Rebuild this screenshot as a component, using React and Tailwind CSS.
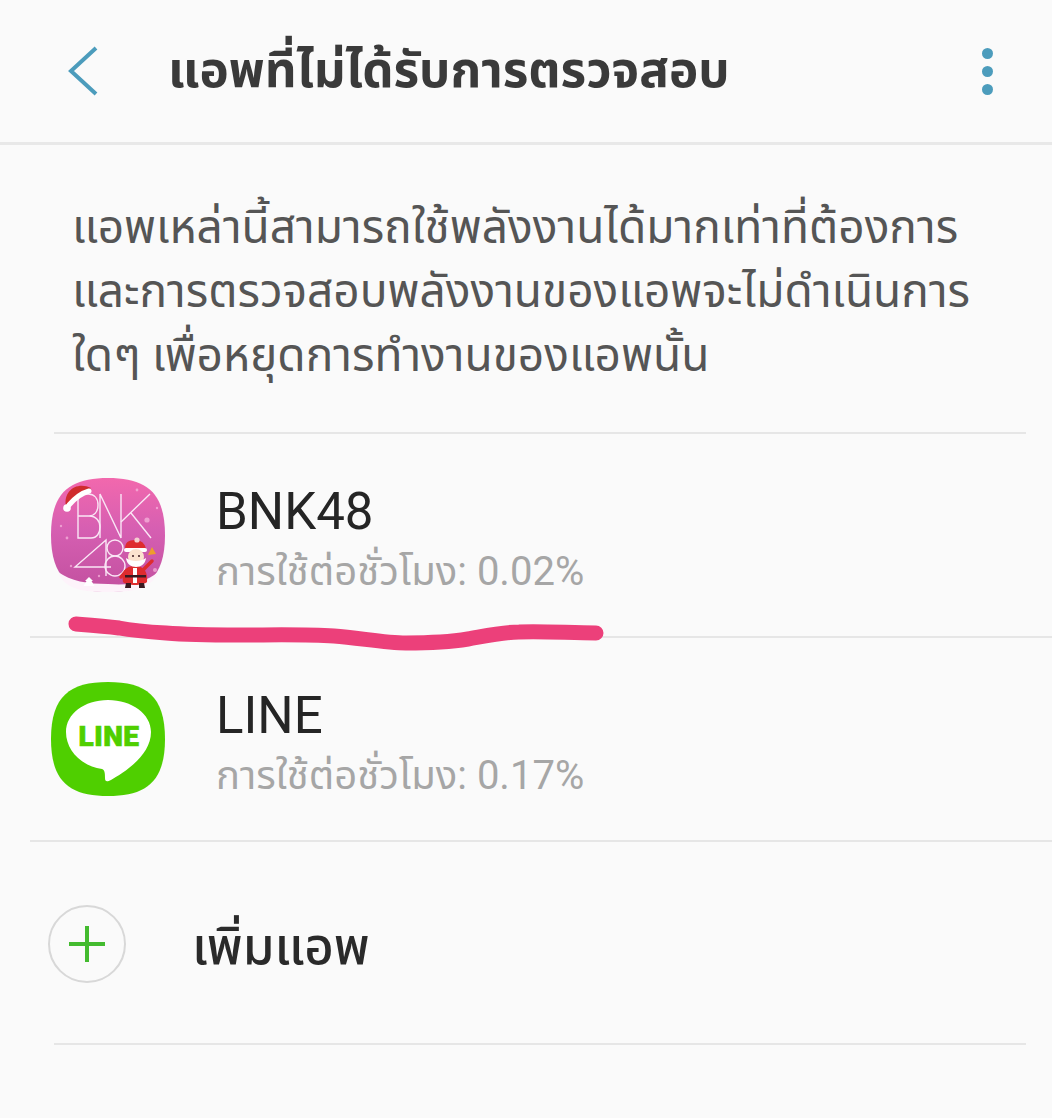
import React from "react";

const squircle =
  "M57 0C95 0 114 14 114 57C114 100 95 114 57 114C19 114 0 100 0 57C0 14 19 0 57 0Z";

function BnkIcon() {
  return (
    <svg width="114" height="114" viewBox="0 0 114 114" className="shrink-0">
      <defs>
        <linearGradient id="bnkBg" x1="0" y1="0" x2="0" y2="1">
          <stop offset="0" stopColor="#f268ad" />
          <stop offset="0.45" stopColor="#d65fb2" />
          <stop offset="1" stopColor="#c2509f" />
        </linearGradient>
      </defs>
      <path d={squircle} fill="url(#bnkBg)" />
      {/* snow along the lower edge */}
      <path
        d="M7 94C20 103 36 106 57 106C80 108 95 104 107 94C101 109 88 114 57 114C26 114 13 109 7 94Z"
        fill="#fdf3fa"
      />
      <g fill="#f6b4dc" opacity="0.75">
        <circle cx="96" cy="42" r="2.6" />
        <circle cx="104" cy="92" r="2" />
        <circle cx="16" cy="60" r="1.4" />
        <circle cx="86" cy="12" r="1.4" />
        <circle cx="10" cy="48" r="1.2" />
        <circle cx="20" cy="88" r="1.2" />
        <circle cx="106" cy="30" r="1.2" />
        <circle cx="48" cy="98" r="1.2" />
      </g>
      <g fill="none" stroke="#fae6f5" strokeWidth="1.4">
        <path d="M27 16V60H40C46 60 49 55 49 49C49 43 45 38 38 38H27M38 38C43 38 47 34 47 27C47 20 43 16 37 16H27" />
        <path d="M49 60V16L70 60V16" />
        <path d="M70 44L99 16M80 35L100 60" />
        <path d="M60 89H24L55 62V98" />
        <circle cx="64" cy="70" r="8" />
        <circle cx="64" cy="88" r="10" />
      </g>
      {/* Santa hat */}
      <path d="M15 28C12 13 26 3 40 10C34 14 26 20 20 28Z" fill="#cf2b2d" />
      <path d="M18 27C24 20 31 15 38 13" fill="none" stroke="#fff" strokeWidth="5" strokeLinecap="round" />
      <circle cx="16" cy="30" r="3.8" fill="#fff" />
      {/* Santa */}
      <path d="M72 104C70 94 74 88 84 88C93 88 97 94 96 104C92 108 76 108 72 104Z" fill="#de2c2e" />
      <path d="M92 92L101 83" stroke="#de2c2e" strokeWidth="3.5" strokeLinecap="round" />
      <path d="M75 93L70 99" stroke="#de2c2e" strokeWidth="3.5" strokeLinecap="round" />
      <rect x="82" y="90" width="4" height="15" fill="#fff" />
      <rect x="74" y="97" width="21" height="2.5" fill="#3a1a20" />
      <path d="M75 105H80V110H74ZM88 105H93L94 110H88Z" fill="#3a1a20" />
      <path d="M74 71C74 62 80 62 86 62C92 63 95 68 95 72Z" fill="#de2c2e" />
      <circle cx="86" cy="62" r="2.6" fill="#f4d0d0" />
      <rect x="73" y="70" width="23" height="4" rx="2" fill="#fff" />
      <circle cx="85" cy="79" r="8" fill="#fbe2cf" />
      <path d="M75 80C76 92 94 92 95 80C90 84 80 84 75 80Z" fill="#fff" />
      <circle cx="82" cy="78" r="1" fill="#3a1a20" />
      <circle cx="88" cy="78" r="1" fill="#3a1a20" />
      {/* Bell */}
      <path d="M97 77L101 69L105 76Z" fill="#ee9d2c" />
      {/* Tree */}
      <path d="M38 99L42 103H40.5L43.5 108H32.5L35.5 103H34Z" fill="#fff" />
    </svg>
  );
}

function LineIcon() {
  return (
    <svg width="114" height="114" viewBox="0 0 114 114" className="shrink-0">
      <path d={squircle} fill="#4fcf00" />
      <path
        d="M57 18C33 18 15 32 15 50C15 68 30 84 51 87C54 88 54 92 54 96C54 100 56 100 60 98C72 91 100 74 100 50C100 32 81 18 57 18Z"
        fill="#fff"
      />
      <text
        x="58"
        y="64"
        textAnchor="middle"
        fill="#4fcf00"
        stroke="#4fcf00"
        strokeWidth="0.7"
        fontFamily="Roboto, sans-serif"
        fontWeight="900"
        fontSize="28"
        letterSpacing="0.5"
      >
        LINE
      </text>
    </svg>
  );
}

function AppRow({ icon, name, usage }) {
  return (
    <div className="ml-[30px] flex h-[204px] items-center border-b-2 border-[#e6e6e6] pl-[21px]">
      {icon}
      <div className="ml-[51px] mt-[12px]">
        <div className="text-[51px] leading-[62px] text-[#252525]">{name}</div>
        <div className="text-[40px] leading-[58px] text-[#a6a6a6]">{usage}</div>
      </div>
    </div>
  );
}

export default function App() {
  return (
    <div className="relative h-[1118px] w-[1052px] overflow-hidden bg-[#fafafa] font-['Roboto','Noto_Sans','Noto_Sans_Thai','DejaVu_Sans',sans-serif]">
      {/* Top bar */}
      <div className="flex h-[145px] items-center border-b-[3px] border-[#e8e8e8] pl-[68px] pr-[59px]">
        <svg width="30" height="50" viewBox="0 0 30 50" className="shrink-0">
          <path d="M28 2L3 25L28 48" fill="none" stroke="#4c9cbc" strokeWidth="4" />
        </svg>
        <h1 className="ml-[70px] flex-1 text-[49.4px] font-bold leading-none text-[#3a3a3a]">
          แอพที่ไม่ได้รับการตรวจสอบ
        </h1>
        <div className="flex flex-col gap-[7px]">
          <span className="h-[11px] w-[11px] rounded-full bg-[#4c9cbc]" />
          <span className="h-[11px] w-[11px] rounded-full bg-[#4c9cbc]" />
          <span className="h-[11px] w-[11px] rounded-full bg-[#4c9cbc]" />
        </div>
      </div>

      {/* Explanation */}
      <div className="ml-[54px] mr-[26px] h-[289px] border-b-2 border-[#e6e6e6] pl-[18px] pt-[50px]">
        <p className="text-[46px] leading-[64px] whitespace-nowrap text-[#555555]">
          แอพเหล่านี้สามารถใช้พลังงานได้มากเท่าที่ต้องการ
          <br />
          และการตรวจสอบพลังงานของแอพจะไม่ดำเนินการ
          <br />
          ใดๆ เพื่อหยุดการทำงานของแอพนั้น
        </p>
      </div>

      <AppRow icon={<BnkIcon />} name="BNK48" usage="การใช้ต่อชั่วโมง: 0.02%" />
      <AppRow icon={<LineIcon />} name="LINE" usage="การใช้ต่อชั่วโมง: 0.17%" />

      {/* Add app */}
      <div className="ml-[48px] flex h-[201px] items-center">
        <div className="mt-[2px] flex h-[78px] w-[78px] items-center justify-center rounded-full border-2 border-[#d8d8d8]">
          <svg width="38" height="38" viewBox="0 0 38 38">
            <path d="M19 1V37M1 19H37" stroke="#43bb2f" strokeWidth="4" />
          </svg>
        </div>
        <span className="ml-[66px] mt-[9px] text-[51px] font-medium text-[#2a2a2a]">เพิ่มแอพ</span>
      </div>
      <div className="ml-[54px] mr-[26px] border-b-2 border-[#e6e6e6]" />

      {/* Marker stroke drawn over the list */}
      <svg width="1052" height="1118" viewBox="0 0 1052 1118" className="pointer-events-none absolute left-0 top-0">
        <path
          d="M76 624C90 625 105 626 119 628C135 631 150 632 166 633C190 635 215 635 239 635C270 635 305 634 334 636C360 638 385 643 406 643C428 643 450 642 468 639C485 636 502 632 519 632C545 631 570 633 596 633"
          fill="none"
          stroke="#ec407a"
          strokeWidth="15"
          strokeLinecap="round"
          strokeLinejoin="round"
        />
      </svg>
    </div>
  );
}
